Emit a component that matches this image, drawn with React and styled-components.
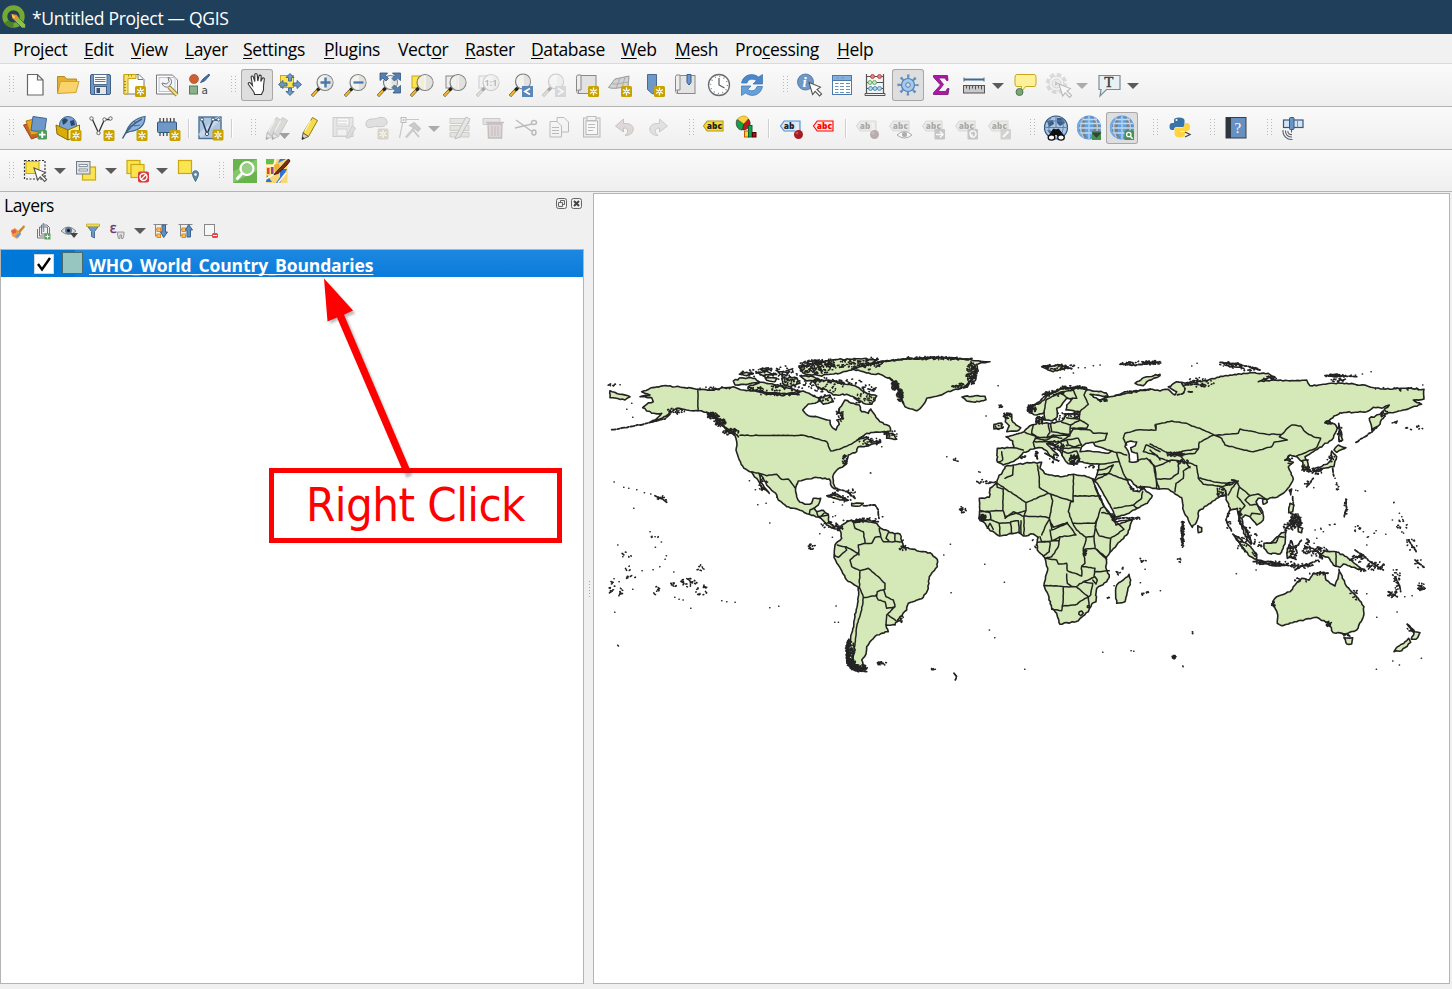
import React from "react";
import styled, { createGlobalStyle, css } from "styled-components";

const Global = createGlobalStyle`
  * { box-sizing: border-box; }
  body { margin: 0; background: #f0f0f0; font-family: "Open Sans", "Noto Sans", sans-serif; font-size: 17.5px; color: #000; overflow: hidden; }
`;

const Window = styled.div`
  position: relative; width: 1452px; height: 989px; display: flex; flex-direction: column; background: #f0f0f0; overflow: hidden;
`;
const TitleBar = styled.header`
  height: 34px; flex: none; display: flex; align-items: center; gap: 6px; padding-left: 2px; background: #203f5a; color: #fff;
  span { letter-spacing: -0.31px; padding-top: 1px; }
`;
const MenuBar = styled.nav`
  height: 30px; flex: none; display: flex; align-items: center; padding: 1px 0 0 13px; border-bottom: 1px solid #dadada; background: #f1f1f1;
`;
const MenuItem = styled.span`
  width: ${(p) => p.$w}px; white-space: nowrap; letter-spacing: -0.38px;
  u { text-underline-offset: 2px; text-decoration-thickness: 1px; text-decoration-skip-ink: none; }
`;
const Toolbar = styled.div`
  height: ${(p) => p.$h || 43}px; flex: none; display: flex; align-items: center;
  background: linear-gradient(#fafafa, #efefef); border-bottom: 1px solid #b4b4b4;
`;
const Button = styled.button`
  appearance: none; width: 33px; height: 32px; flex: none; margin: 0; border: 0; background: none; padding: 0 0 0 5px; display: flex; align-items: center;
  ${(p) => p.$on && css`background: #dedede; box-shadow: inset 0 0 0 1px #a8a8a8; border-radius: 3px; width: 32px; margin-left: 1px; padding-left: 4px;`}
  ${(p) => p.$off && css`svg { opacity: 0.36; filter: grayscale(0.75); }`}
  svg { flex: none; overflow: visible; }
`;
const Grip = styled.i`
  width: ${(p) => p.$w}px; flex: none; height: 18px; padding-left: ${(p) => p.$o}px;
  &::before { content: ""; display: block; width: 5px; height: 17px; background: radial-gradient(circle at 0.5px 0.5px, #b9b9b9 0.6px, transparent 0.7px) 0 0 / 4px 3px; }
`;
const Separator = styled.i`
  width: ${(p) => p.$w}px; flex: none; padding-left: 5px;
  &::before { content: ""; display: block; width: 1px; height: 19px; background: #cfcfcf; box-shadow: 1px 0 #fff; }
`;
const Caret = styled.i`
  width: ${(p) => p.$w || 17}px; flex: none; display: flex; justify-content: center; padding: 1px 2px 0 0;
  &::before { content: ""; border: 6px solid transparent; border-top-color: ${(p) => (p.$off ? "#ababab" : "#5b5b5b")}; border-bottom: 0; }
`;
const Main = styled.main` flex: 1; min-height: 0; display: flex; padding: 1px 2px 5px 0; `;
const Dock = styled.section` width: 584px; flex: none; display: flex; flex-direction: column; `;
const DockTitle = styled.div`
  height: 23px; display: flex; align-items: center; padding: 0 0 0 4px; font-size: 17.5px;
  span { flex: 1; letter-spacing: -0.5px; }
  svg { margin: -4px 0 0 1px; }
`;
const DockTools = styled.div`
  height: 33px; display: flex; align-items: center; padding: 0 0 4px 10px;
  svg { display: block; overflow: visible; flex: none; }
`;
const ToolSlot = styled.span` width: ${(p) => p.$w}px; flex: none; `;
const Tree = styled.div` flex: 1; background: #fff; border: 1px solid #b4b4b4; `;
const LayerRow = styled.div`
  height: 27px; display: flex; align-items: center; padding-left: 33px; color: #fff; font-size: 17.5px; font-weight: 700;
  background: linear-gradient(90deg, #0078d7 74px, transparent 74px), linear-gradient(#1c88e1, #0b7cdb);
  span { text-decoration: underline; text-decoration-thickness: 1px; text-underline-offset: 2px; text-decoration-skip-ink: none; letter-spacing: -0.13px; padding-top: 2px; }
`;
const Check = styled.i` width: 20px; height: 20px; background: #fff; border: 1px solid #cfd8df; margin-right: 8px; display: flex; svg { display: block; } `;
const Swatch = styled.i` width: 21px; height: 22px; background: #96c6bf; border: 1px solid #4a6a6c; margin: -1px 6px 0 0; `;
const Splitter = styled.div`
  width: 9px; flex: none; display: flex; align-items: center; justify-content: center; padding-left: 1px;
  &::before { content: ""; width: 1px; height: 16px; background: repeating-linear-gradient(#a8a8a8 0 1px, transparent 1px 3px); }
`;
const MapFrame = styled.section` flex: 1; background: #fff; border: 1px solid #b4b4b4; svg { display: block; } `;
const Callout = styled.div`
  position: absolute; left: 269px; top: 468px; width: 293px; height: 75px; border: 5px solid #f00; background: #fff; color: #f00;
  font: 47px/63px "DejaVu Sans Condensed", "DejaVu Sans", sans-serif; font-stretch: condensed; text-align: center; letter-spacing: -0.6px; white-space: nowrap;
`;
const ArrowLayer = styled.svg` position: absolute; left: 310px; top: 270px; pointer-events: none; `;

/* ---------- icon pieces ---------- */
const Star = ({ x = 13, y = 13 }) => (
  <g transform={`translate(${x} ${y})`}>
    <rect width="11" height="11" rx="1.5" fill="#c8a300" />
    <path d="M5.5 1.5v8M2 3.5l7 4M9 3.5l-7 4" stroke="#fff" strokeWidth="1.3" />
    <circle cx="5.5" cy="5.5" r=".8" fill="#c8a300" />
  </g>
);
const Lens = ({ x = 14, y = 9.5, r = 8, children }) => (
  <g>
    <path d={`M1 23l7-7.5`} stroke="#4b3a10" strokeWidth="3" />
    <path d="M1.3 22.7L6 17.6" stroke="#fcb932" strokeWidth="2" />
    <path d="M6.5 17.2l2.6-2.6" stroke="#222" strokeWidth="3.2" />
    <circle cx={x} cy={y} r={r} fill="#f1f1ee" fillOpacity=".88" stroke="#7b7d7b" strokeWidth="1.2" />
    <path d={`M${x + 1} ${y - r + 1}a${r - 1} ${r - 1} 0 0 1 0 ${2 * r - 2}z`} fill="#d5d6d2" opacity=".6" />
    {children}
  </g>
);
const Cursor = ({ x = 10, y = 10 }) => (
  <path transform={`translate(${x} ${y})`} d="M0 0l3.6 12 2.6-3.2 4.4 4.6 2-2-4.6-4.4 3.4-2.4z" fill="#fff" stroke="#555" strokeWidth="1.1" />
);
const Pencil = ({ x = 0, fill = "#f4dc4f" }) => (
  <g transform={`translate(${x} 0)`}>
    <path d="M4 17L13.5 1.5l5 3L9.5 20.500z" fill={fill} stroke="#8d7a20" strokeWidth="1" />
    <path d="M11.700 4.500l-6 11" stroke="#fff6b0" strokeWidth="1.2" />
    <path d="M4 17l-1 6.500 6.500-3z" fill="#d8cfb8" stroke="#555" strokeWidth=".9" />
    <path d="M3 23.500l.4-2.800 2.200 1.600z" fill="#222" />
  </g>
);
const Tag = ({ t = "abc", fill = "#f8da35", stroke = "#b59a1a", color = "#222", w = 16 }) => (
  <g>
    <path d={`M1.500 10l3.700-5H${w + 5}v10H5.200z`} fill={fill} stroke={stroke} strokeWidth="1.1" />
    <text x="4.8" y="13" fontFamily="Open Sans" fontWeight="800" fontSize="8.400" fill={color}>{t}</text>
  </g>
);
const Ball = () => (<g><path d="M17.500 6.500l1.200 6-2 3h3.500" fill="#ddd" stroke="#eee" strokeWidth="2" /><circle cx="19.500" cy="18.500" r="4.500" fill="#a51c22" /><circle cx="18" cy="17" r="1.500" fill="#c9484b" /></g>);
const Globe = () => (
  <g>
    <circle cx="12" cy="11.500" r="11.500" fill="#7c8087" />
    <circle cx="12" cy="11.500" r="11.300" fill="none" stroke="#5d97dc" strokeWidth="1.600" />
    <ellipse cx="12" cy="11.500" rx="4.500" ry="11" fill="#5fa3e4" />
    <path d="M1 7.500h22M0 12h24M2 17h20M4 3.500h16" stroke="#c2daf2" strokeWidth="1.300" />
    <path d="M12 0v23M6.500 1.500c-4 6-4 14 0 20M17.500 1.500c4 6 4 14 0 20" stroke="#b5d2ee" strokeWidth="1.300" fill="none" />
    <path d="M5 3C-.5 9 0 15 4 20" stroke="#74ace6" strokeWidth="2" fill="none" />
  </g>
);
const Card = ({ x, y, f = "#fbe44f" }) => <rect x={x} y={y} width="13" height="13" fill={f} stroke="#c9a810" strokeWidth="1.200" />;

const P = "#6d98c8";
const icons = {
  new: <path d="M4.500 1.500h10L20 7v15H4.500zM14.500 1.500V7H20" fill="#fff" stroke="#666" strokeWidth="1.200" />,
  open: <g><path d="M1.500 20V3.500h7l2 2.500h10v3" fill="#e2b133" stroke="#b98a22" /><path d="M1.500 20.500L4.500 8.500H23L20 19.500z" fill="#fbd36b" stroke="#d3a12e" /></g>,
  save: <g><rect x="1.500" y="1.500" width="20" height="20" rx="1.500" fill={P} stroke="#3f5f86" /><rect x="4.500" y="1.500" width="13.500" height="10" fill="#fafafa" stroke="#55708f" /><path d="M6 4.500h10.500M6 6.500h10.500M6 8.500h10.500" stroke="#777" /><rect x="5.500" y="13.500" width="12" height="8" fill="#e4e6e8" stroke="#3f5f86" /><rect x="7.500" y="15" width="3.500" height="5" fill="#3a5674" /></g>,
  layout: <g><path d="M2 1.500h15l5 5V21H2z" fill="#fff" stroke="#777" /><path d="M2 1.500h12v4H6V21H2z" fill="#f7df72" stroke="#c8a412" /><path d="M6.500 1.500v2M9.500 1.500v2M2 8.500h2M2 11.500h2M2 14.500h2M2 17.500h2" stroke="#927812" strokeWidth=".8" /><path d="M16 1.500v5h5" fill="none" stroke="#777" /><Star /></g>,
  manager: <g><path d="M1.500 2h16l5 5v14h-21z" fill="#fff" stroke="#777" /><rect x="4" y="4.500" width="16" height="14" fill="#f3f6fb" stroke="#b9c4d8" /><path d="M14 14l8 8" stroke="#927d34" strokeWidth="4" /><path d="M14 14l8 8" stroke="#f0dd8b" strokeWidth="2.400" /><path d="M13 4.500c3 .5 4.500 3.500 3 6.500l-2.500 3c-3 .8-6-1-6.500-4l4.500 1 2.500-2.500z" fill="#eee" stroke="#777" /></g>,
  style: <g><circle cx="6" cy="6" r="4.500" fill="#cf5f31" stroke="#9a3f20" strokeWidth=".6" /><path d="M12.500 9.500l2.500-3.500 6-5 .5 1.500-5 5.500z" fill="#4b719c" stroke="#345b87" /><rect x="1.500" y="13" width="8" height="8" fill="#8bb08b" stroke="#4f8055" /><text x="13.500" y="21" fontFamily="DejaVu Sans" fontSize="10.500" fill="#444">a</text></g>,
  hand: <path d="M7.500 17L3.500 11.500c-1-1.500 1-2.600 2-1.400l2 2.400L6.200 4.500c-.3-1.700 1.800-2 2.200-.5l1.400 4.500V1.700c0-1.600 2.300-1.600 2.400 0L12.800 8l1.200-5c.4-1.500 2.300-1 2.200.5L15.800 8.500l1.500-3c.7-1.300 2.400-.6 2 .8L18.500 13v3.500c0 2-1.500 3-2 5H9.500c0-2-1-3-2-4.500z" fill="#fff" stroke="#333" strokeWidth="1.100" />,
  pan: <g><rect x="2.500" y="2.500" width="13" height="12" fill="#fbe44f" stroke="#c9a810" /><path d="M12 .5l4 4h-2.500v3.500h-3V4.500H8zM12 22.500l4-4h-2.500V15h-3v3.500H8zM.5 11.500L5 7.500V10h4v3H5v2.500zM23.500 11.500L19 7.500V10h-4v3h4v2.500z" fill={P} stroke="#3d648f" strokeWidth=".9" /></g>,
  zin: <Lens><path d="M14.500 4.500v10M9.500 9.500h10" stroke="#4878ac" strokeWidth="2.400" /></Lens>,
  zout: <Lens><path d="M9.500 9.500h10" stroke="#4878ac" strokeWidth="2.200" /></Lens>,
  full: <g><Lens x={13.500} y={9.500} r={7} /><path d="M3 0h7.500L8.500 2.500l3 3-2.500 2.500-3-3L3 7.500zM23.500 0v7.500l-3-2.500-3 3L15 5.500l3-3L15.500 0zM23.500 20H16l2-2.500-3-3 2.500-2.500 3 3 3-2.500z" fill="#5580b2" stroke="#31577f" strokeWidth=".8" /></g>,
  zsel: <g><rect x="2" y="3" width="11" height="12" fill="#fbe44f" stroke="#c9a810" /><Lens x={15} /></g>,
  zlay: <g><rect x="3" y="3" width="11" height="12" fill="#eee" stroke="#888" /><Lens x={15} /></g>,
  znat: <g><rect x="3" y="3" width="11" height="12" fill="#eee" stroke="#888" /><Lens x={15} /><text x="8.500" y="13" fontFamily="Open Sans" fontWeight="700" fontSize="9" fill="#555">1:1</text></g>,
  zlast: <g><Lens x={14} y={8.500} r={7.500} /><rect x="13" y="13" width="11" height="11" fill="#5b87b7" /><path d="M21 15.500L16 18.500l5 3" stroke="#fff" strokeWidth="1.800" fill="none" /></g>,
  znext: <g><Lens x={14} y={8.500} r={7.500} /><rect x="13" y="13" width="11" height="11" fill="#9aa8b7" /><path d="M16 15.500l5 3-5 3" stroke="#fff" strokeWidth="1.800" fill="none" /></g>,
  mapview: <g><rect x="3.500" y="2.500" width="17.500" height="18" fill="#e2e2e2" stroke="#888" /><path d="M3.500 20.500c-3-1-2-3.500 0-3.500H6V2H3C1 2 1.500 5 1.500 7v11" fill="#eee" stroke="#888" /><Star /></g>,
  view3d: <g><path d="M.5 14.500L7 6l14-3-1 12c-7-2-12 2-19.500-.5z" fill="#d2d2d2" stroke="#999" /><path d="M4 10.500c6 2 10-2 17-1M12 5L8 15.500M17 4l-3 11" stroke="#aaa" fill="none" /><Star /></g>,
  bookmark: <g><path d="M6.500 1.500h9v20l-4.500-1-4.500-4z" fill={P} stroke="#456b96" /><Star x={13} y={13} /></g>,
  bookmarks: <g><rect x="3.500" y="2.500" width="17.500" height="18" fill="#e4e4e4" stroke="#888" /><path d="M3.500 20.500c-3-1-2-3.500 0-3.500H6V2H3C1 2 1.500 5 1.500 7v11" fill="#eee" stroke="#888" /><path d="M13 1.500h4v8l-2 2.500-2-2.500z" fill={P} stroke="#365d8a" /></g>,
  clock: <g><circle cx="12" cy="12" r="10.500" fill="#fff" stroke="#6b6b6b" strokeWidth="1.300" /><circle cx="12" cy="12" r="8.500" fill="none" stroke="#789" strokeWidth="1.500" strokeDasharray="1 3.450" /><path d="M12 5v7l5.500 3" stroke="#555" strokeWidth="1.200" fill="none" /></g>,
  refresh: <g><path d="M1.500 10C3 2 12-1 18.500 4L22.500 1.500V11h-9.500l3.500-3.500C12 5 8 6 7 10z" fill="#4b88cb" stroke="#3b70ac" strokeWidth=".7" /><path d="M22.500 13.500C21 22 12 25 5.500 20L1.500 22.500V13H11L7.500 16.500c4 2.500 8 1.500 9.500-3z" fill="#66a0da" stroke="#3b70ac" strokeWidth=".7" /></g>,
  identify: <g><circle cx="8.500" cy="9" r="8" fill={P} stroke="#466f9f" strokeWidth=".8" /><text x="5.500" y="14" fontFamily="Liberation Serif" fontStyle="italic" fontWeight="700" fontSize="15" fill="#fff">i</text><Cursor x={12} y={9.500} /></g>,
  table: <g><rect x="2.500" y="2.500" width="19" height="19" fill="#fff" stroke="#4b7aaa" /><rect x="3" y="3" width="18" height="4" fill="#86b1df" /><path d="M2.500 7.500h19" stroke="#4b7aaa" /><path d="M5 10.500h3.500M5 13.500h3.500M5 16.500h3.500M5 19.500h3.500M10 10.500h4M10 13.500h4M10 16.500h4M10 19.500h4M16 10.500h4M16 13.500h4M16 16.500h4M16 19.500h4M6 5h3M11 5h3" stroke="#6a93bf" /></g>,
  abacus: <g><path d="M3.500 1v20M20.500 1v20M3.500 3.500h17M3.500 9.500h17M3.500 15.500h17" stroke="#555" strokeWidth="1.200" /><path d="M2 20.500h20v2H2z" fill="#eee" stroke="#555" /><g strokeWidth=".8"><g fill="#ef8080" stroke="#a33"><circle cx="9.500" cy="3.500" r="2" /><circle cx="16.500" cy="3.500" r="2" /></g><g fill="#c1edbc" stroke="#5a9a55"><circle cx="7" cy="9.500" r="2" /><circle cx="11.500" cy="9.500" r="2" /></g><g fill="#a9d6f2" stroke="#3d7ca8"><circle cx="7.500" cy="15.500" r="2" /><circle cx="12" cy="15.500" r="2" /><circle cx="16.500" cy="15.500" r="2" /></g></g></g>,
  gear: <g><circle cx="12" cy="12" r="8.700" fill="none" stroke="#5f90c6" strokeWidth="3.800" strokeDasharray="2.300 4.533" strokeDashoffset="1.150" /><circle cx="12" cy="12" r="6.500" fill="#a7c9ee" stroke="#4d7fb5" strokeWidth="1.200" /><circle cx="12" cy="12" r="2.300" fill="#dedede" stroke="#4d7fb5" /></g>,
  sigma: <path d="M4.500 2.500h14l.5 5h-1.500L16 5H9.500l5 6.500L9 18.500h7.500l2-3H20l-1 6H4.500v-1.800l7-7.700-7-7.800z" fill="#b116aa" stroke="#73116f" strokeWidth=".8" />,
  measure: <g><path d="M2 4.500v4M22 4.500v4" stroke="#42688c" strokeWidth="1" /><path d="M2 6.500h20" stroke="#42688c" strokeWidth="2" /><rect x="1.500" y="12.500" width="21" height="7.500" fill="#c9c9c9" stroke="#555" /><path d="M4.500 12.500v3M7.500 12.500v4M10.500 12.500v3M13.500 12.500v4M16.500 12.500v3M19.500 12.500v4" stroke="#555" /></g>,
  tips: <g><path d="M4 1.500h17q2 0 2 2.500v7q0 2.500-2 2.500h-8.500L8 19.500l.5-6H4q-2 0-2-2.500V4q0-2.500 2-2.500z" fill="#fff09a" stroke="#c8a71f" /><circle cx="6.500" cy="19" r="3.500" fill="#7ba47b" stroke="#4d784d" /></g>,
  action: <g><circle cx="10.500" cy="10.500" r="8.700" fill="none" stroke="#aaa" strokeWidth="4" strokeDasharray="4.400 2.433" /><circle cx="10.500" cy="10.500" r="7.500" fill="#eee" stroke="#999" /><circle cx="10.500" cy="10.500" r="4.500" fill="#ddd" stroke="#999" /><path d="M9 8v5l4-2.500z" fill="#777" /><Cursor x={13} y={11} /></g>,
  text: <g><path d="M2 2.500h21v14H9.500L3 23l1-6.500H2z" fill="#e8f2f5" stroke="#7b8b95" strokeWidth="1.200" /><text x="7.300" y="14.200" fontFamily="Liberation Serif" fontWeight="400" fontSize="15" fill="#3a3a3a" stroke="#3a3a3a" strokeWidth=".4">T</text></g>,

  datasource: <g><path d="M.5 9l11-3 5 14-8 3z" fill="#cc5d2e" stroke="#9f431e" /><path d="M3 5l12-3 4 15-11 2z" fill="#e6a91f" stroke="#ae7d10" /><path d="M10 .5l13.500 2-2 14L8 14.500z" fill={P} stroke="#3d6491" /><rect x="14.500" y="14" width="9.500" height="9.500" rx="1.500" fill="#4f9a5c" /><path d="M19.200 15.500V22M16 18.700h6.500" stroke="#fff" strokeWidth="1.800" /></g>,
  geopackage: <g><circle cx="12" cy="9" r="8.500" fill="#7aa4d5" stroke="#456b96" /><path d="M6 4l3-2 3 2-2 3-3 2zM14 5l4-1 1 5-4 1z" fill="#2a4768" /><path d="M0 9l12 5v10L1 18z" fill="#d9ac09" stroke="#8d6c00" /><path d="M12 14l11.500-5v10L12 24z" fill="#fff176" stroke="#8d6c00" /><Star x={14.500} y={14} /></g>,
  shape: <g><path d="M3 2.500L9.500 17 15.500 3.500h6" fill="none" stroke="#333" strokeWidth="1.300" /><g fill="#fff" stroke="#666"><circle cx="2.500" cy="2.500" r="1.700" /><circle cx="9.500" cy="17" r="1.700" /><circle cx="15.500" cy="3.500" r="1.700" /><circle cx="21.500" cy="2.500" r="1.700" /></g><Star x={14.500} y={14} /></g>,
  feather: <g><path d="M4 17C6 9 13 2 23 .5 23 8 19 14 8 15.500z" fill="#8fb4dc" stroke="#3d648f" strokeWidth="1.200" /><path d="M.500 22.500C5 13 12 7 20 3" stroke="#3d5f86" strokeWidth="1.400" fill="none" /><path d="M8 13l1-4M12 10l1-5M12 10l6-1" stroke="#486e99" fill="none" /><Star x={14.500} y={14} /></g>,
  memory: <g><path d="M5 2v18M8.500 2v18M12 2v18M15.500 2v18M19 2v18" stroke="#444" strokeWidth="1.300" /><rect x="2.500" y="6" width="19" height="10.500" rx="1" fill={P} stroke="#33577f" /><Star x={14.500} y={14} /></g>,
  virtual: <g><rect x="1" y="1" width="22" height="21.500" fill="#aec5dd" stroke="#4b6f97" strokeWidth="1.400" /><path d="M1.500 20L22 1.500" stroke="#d7e3f0" strokeWidth="5" opacity=".6" /><path d="M4 3.500L9 18l6-14h5" fill="none" stroke="#223f60" strokeWidth="1.500" /><g fill="#fff" stroke="#355679"><circle cx="4" cy="3.500" r="1.600" /><circle cx="9" cy="18" r="1.600" /><circle cx="15" cy="3.500" r="1.600" /><circle cx="20.500" cy="3.500" r="1.600" /></g><Star x={14.500} y={13.500} /></g>,
  pencils: <g><Pencil x={-3} fill="#aaa" /><Pencil x={3} fill="#aaa" /><path d="M13 17h11l-5.500 6z" fill="#111" /></g>,
  pencil: <Pencil />,
  savepen: <g><rect x="1" y="1.500" width="20" height="19" fill="#ccc" stroke="#888" /><rect x="5" y="2" width="12" height="8" fill="#fff" stroke="#888" /><path d="M6 5h9M6 8h9" stroke="#999" /><rect x="5" y="13" width="10" height="7" fill="#eee" stroke="#999" /><path d="M14 22l6-12 3.500 2-6 10z" fill="#bba" stroke="#888" /></g>,
  blob: <g><path d="M1 9c-1-8 8-5 12-7 5-2 10 1 9 5s-7 4-10 3.500C8 10 2 14 1 9z" fill="#bbb" stroke="#777" /><Star x={12.500} y={12.500} /></g>,
  vertex: <g><path d="M1.500 22L5 5M8 3.500h13" fill="none" stroke="#777" strokeWidth="1.200" /><rect x="3" y="1.500" width="5" height="5" fill="#eee" stroke="#555" /><circle cx="5.500" cy="4" r="1" fill="#555" /><path d="M17 11L8 21.500" stroke="#888" strokeWidth="2.600" /><path d="M12 9.500l4-2.500 6 5.500-2 2.500-4-3.500zM15 14l6 7" fill="#888" stroke="#777" strokeWidth="1.800" /></g>,
  multiedit: <g><path d="M2 2.500h19v5H2zM2 9.500h19v5H2zM2 16.500h19v4.500H2z" fill="#d9c97a" stroke="#888" /><path d="M8 20L18 1l4 2-10 18-5 2z" fill="#ccc" stroke="#666" /></g>,
  trash: <g><path d="M2 2.500h17v6H2z" fill="#d8bcbc" stroke="#977" /><path d="M5 6.500h18M7 8l.5 14h13L21 8z" fill="#d99" stroke="#a55" strokeWidth="1.400" /><path d="M11 10v10M14 10v10M17 10v10" stroke="#a55" /></g>,
  cut: <g fill="none" stroke="#555" strokeWidth="1.400"><path d="M2 4l16 11.500M1 12l17-4" /><ellipse cx="20" cy="6.500" rx="2.500" ry="2" /><ellipse cx="20" cy="16.500" rx="2" ry="2.500" /></g>,
  copy: <g fill="#f4f4f4" stroke="#555"><path d="M10 1.500h7l4.500 4.500V16H10z" /><path d="M3 5.500h7l4.500 4.500v11H3z" /><path d="M5 11.500h7M5 14.500h7M5 17.500h7" /></g>,
  paste: <g stroke="#555"><rect x="3.500" y="2" width="16.500" height="19" fill="#ddd" /><rect x="6" y="5" width="11.500" height="13.500" fill="#fff" /><rect x="7" y=".5" width="9" height="4" fill="#eee" /><path d="M8 8.500h7M8 11.500h7M8 14.500h5" /></g>,
  undo: <path d="M2.500 10l8-7v4.500c8-.5 10.500 3 9.500 7-1 4-5 5-8 5 3-2 5-7.500-1.500-7.500V16z" fill="#d8a08a" stroke="#98604a" />,
  redo: <path d="M21.500 10l-8-7v4.500c-8-.5-10.500 3-9.500 7 1 4 5 5 8 5-3-2-5-7.500 1.500-7.500V16z" fill="#b5c7a8" stroke="#6a8a5c" />,
  label: <Tag />,
  diagram: <g><path d="M9 8L2 3.500C0 8 2 14 7 14z" fill="#12a04a" stroke="#222" strokeWidth=".6" /><path d="M9 8L2.500 3c4-4 9-4 11 0z" fill="#ffd23b" stroke="#a80" strokeWidth=".6" /><path d="M9 8l4.500-5c3.500 4 1.500 11-6 11z" fill="#b71c1c" stroke="#222" strokeWidth=".6" /><rect x="9.500" y="15" width="4" height="6" fill="#ffd23b" stroke="#c50" /><rect x="13.500" y="9.500" width="3.500" height="11.500" fill="#1ba052" stroke="#063" /><rect x="17.500" y="16.500" width="3.500" height="4.500" fill="#a11" stroke="#500" /></g>,
  labelpin: <g><Tag t="ab" fill="#d5e7fa" stroke="#4b8fd8" /><Ball /></g>,
  labelred: <Tag fill="#fde8e8" stroke="#f00" color="#f00" />,
  labelhold: <g><Tag t="ab" fill="#ddd8c0" stroke="#aa9" /><Ball /></g>,
  labeleye: <g><Tag fill="#ddd8c0" stroke="#aa9" /><path d="M9 19q7.500-7 15 0-7.500 6-15 0z" fill="#fff" stroke="#333" /><circle cx="16.500" cy="18.500" r="2.500" fill="#333" /></g>,
  labelmove: <g><Tag fill="#ddd8c0" stroke="#aa9" /><rect x="13.500" y="13" width="10.500" height="10.500" rx="1" fill="#777" /><path d="M15 18.500h7M19 15.500l3 3-3 3" stroke="#fff" strokeWidth="1.600" fill="none" /></g>,
  labelrot: <g><Tag fill="#ddd8c0" stroke="#aa9" /><rect x="13.500" y="13" width="10.500" height="10.500" rx="1" fill="#777" /><path d="M17 21l-1-3a3 3 0 1 1 4.500 2.500M18 18v3h3" stroke="#fff" strokeWidth="1.400" fill="none" /></g>,
  labeledit: <g><Tag fill="#ddd8c0" stroke="#aa9" /><rect x="13.500" y="13" width="10.500" height="10.500" rx="1" fill="#997" /><path d="M16 21l5.500-5.500" stroke="#fff" strokeWidth="2.200" /></g>,
  metasearch: <g><circle cx="12" cy="11.500" r="11.500" fill="#a9c4e4" stroke="#2d5078" strokeWidth="1.200" /><path d="M3 5l6-1 1 4-5 3zM13 2h5l3 5-5 3-3-3zM3 14l5 1-1 4z" fill="#3c5c82" /><path d="M0 11.500h24M12 0v12M3 5h18M7 1c-3 6-3 12 0 18M17 1c3 6 3 12 0 18" stroke="#587ca4" strokeWidth=".9" /><path d="M5 20L9.500 13l2.500 1 2.500-1L20 20l-4 2-4-4-4 4z" fill="#111" stroke="#111" /><g fill="#fff" stroke="#111" strokeWidth="1.300"><ellipse cx="7.500" cy="21.500" rx="3.300" ry="2.600" /><ellipse cx="17" cy="21.500" rx="3.300" ry="2.600" /></g></g>,
  globeadd: <g><Globe /><rect x="15" y="15" width="9" height="9" fill="#43934f" /><path d="M14.500 16.500h10l-5 5.500z" fill="#3a403a" /></g>,
  globefind: <g><Globe /><rect x="14.500" y="14.500" width="9.500" height="9.500" fill="#43934f" /><circle cx="18.800" cy="18.500" r="2.200" fill="none" stroke="#fff" strokeWidth="1.300" /><path d="M20.500 20.500l2.200 2.200" stroke="#fff" strokeWidth="1.500" /></g>,
  python: <g><path d="M6 7V4q0-2.500 5-2.500T16.500 4v5q0 2-2 2H8.500Q6 11 6 14H4Q1.500 14 1.500 10.500T4 7h7" fill="#3874a5" /><path d="M16.500 7h2.500q3 0 3 4t-3 4h-7v.7h5V18q0 3.500-5 3.500T6.500 18v-4q0-2.500 2.500-2.500h5q2.500 0 2.500-3z" fill="#ffd342" /><circle cx="8.500" cy="4" r="1" fill="#fff" /><path d="M17 16l5 2.500-5 2.500" stroke="#444" strokeWidth="1.300" fill="none" /></g>,
  help: <g><rect x="2" y="1.500" width="20" height="20.500" fill="#6790c0" stroke="#333e4b" /><rect x="2" y="1.500" width="5" height="20.500" fill="#2b3641" /><text x="10.500" y="17" fontFamily="Liberation Serif" fontSize="15" fill="#fff">?</text></g>,
  gps: <g><rect x="2.500" y="4" width="19.500" height="7.500" fill="#d5e4f4" stroke="#33577f" strokeWidth="1.200" /><rect x="8.500" y="1.500" width="4.500" height="12" rx="1" fill="#6895c8" stroke="#33577f" /><path d="M16.500 4v7.500" stroke="#6b93bd" /><path d="M10.500 13.500v3M7 15c-.5 2 1 4 4 3.500M4.500 14.500c-.5 4 2.500 7 6.500 6.500M2 14c-.5 6 4 10 9.500 9.500" fill="none" stroke="#55606d" strokeWidth="1.100" /></g>,

  select: <g><rect x="1.500" y="1.500" width="20.500" height="18.500" fill="none" stroke="#333" strokeDasharray="2 1.500" strokeWidth="1.200" /><rect x="3" y="2.500" width="13" height="12" fill="#fbe44f" stroke="#c9a810" /><Cursor x={11} y={9} /></g>,
  form: <g><Card x={7.500} y={8} /><rect x="1.500" y="2.500" width="13.500" height="12.500" fill="#dfe3e8" stroke="#707a88" /><path d="M4 5.500h8.500v2H4zM4 10h8.500v2H4z" fill="#fff" stroke="#8893a0" /></g>,
  deselect: <g><Card x={1} y={1.500} /><Card x={5} y={5.500} /><rect x="12" y="12.500" width="11" height="11" rx="2" fill="#d9393d" /><circle cx="17.500" cy="18" r="3.500" fill="none" stroke="#fff" strokeWidth="1.400" /><path d="M15 20.500l5-5" stroke="#fff" strokeWidth="1.400" /></g>,
  selectpin: <g><Card x={2.500} y={1.500} /><path d="M19.500 22.500l-2.500-5q-1.500-5.500 2.500-5.800 4 .3 2.500 5.800z" fill="#648ba5" stroke="#496f88" /><circle cx="19.500" cy="15.500" r="1.300" fill="#fff" /></g>,
  qms: <g><rect x="0" y="0" width="24" height="24" fill="#67b34c" /><path d="M0 12.500L24 0v12L0 24z" fill="#82c768" /><circle cx="14" cy="9.500" r="6.500" fill="#b9dca9" fillOpacity=".45" stroke="#fff" strokeWidth="2.200" /><path d="M9.500 14l-6 6.500" stroke="#fff" strokeWidth="2.800" /></g>,
  osm: <g><rect x="0" y="0" width="21.500" height="24" fill="#f8d77a" /><path d="M0 0h8v5H0z" fill="#5fc04f" /><path d="M12 4l8-4h-6zM14 10h7l-3 6-4 8h-4l4-6zM1 16l5 7H0z" fill="#2f73dd" /><path d="M10 0L7 8M0 20l9-6M0 7h8M20 14l-8 10" stroke="#fff7d9" strokeWidth="1.800" fill="none" /><path d="M8 6l5-2 1 5-5 5z" fill="#efb135" /><rect x="1" y="9" width="2.500" height="6" fill="#de4646" /><rect x="5" y="8" width="2.500" height="7" fill="#8a4a8e" /><path d="M8 15.500L19.500 3l3-3 1.500 2-3 4-9 8.500z" fill="#7c2e12" stroke="#441b0c" /></g>,
};
const Icon = ({ n }) => <svg width="24" height="24" viewBox="0 0 24 24" fill="none">{icons[n]}</svg>;

/* g: grip [width, dot offset]; s: separator; c: caret; "!" pressed, "-" disabled */
const rows = [
  [["g", 18, 9], "new", "open", "save", "layout", "manager", "style", ["g", 24, 15], "!hand", "pan", "zin", "zout", "full", "zsel", "zlay", "-znat", "zlast", "-znext", "mapview", "view3d", "bookmark", "bookmarks", "clock", "refresh", ["g", 24, 15], "identify", "table", "abacus", "!gear", "sigma", "measure", ["c", 18], "tips", "-action", ["c", 18, 1], "text", ["c", 17]],
  [["g", 18, 9], "datasource", "geopackage", "shape", "feather", "memory", ["s", 10], "virtual", ["s", 10], ["g", 25, 15], "-pencils", "pencil", "-savepen", "-blob", "-vertex", ["c", 17, 1], "-multiedit", "-trash", "-cut", "-copy", "-paste", "-undo", "-redo", ["g", 23, 15], "label", "diagram", ["s", 11], "labelpin", "labelred", ["s", 10], "-labelhold", "-labeleye", "-labelmove", "-labelrot", "-labeledit", ["g", 24, 15], "metasearch", "globeadd", "!globefind", ["g", 25, 15], "python", ["g", 23, 14], "help", ["g", 24, 15], "gps"],
  [["g", 18, 9], "select", ["c", 19], "form", ["c", 18], "deselect", ["c", 17], "selectpin", ["g", 24, 15], "qms", "osm"],
];
const renderTool = (t, i) => {
  if (Array.isArray(t)) {
    if (t[0] === "g") return <Grip key={i} $w={t[1]} $o={t[2]} />;
    if (t[0] === "s") return <Separator key={i} $w={t[1]} />;
    return <Caret key={i} $w={t[1]} $off={t[2]} />;
  }
  const on = t[0] === "!", off = t[0] === "-";
  return <Button key={i} $on={on} $off={off}><Icon n={on || off ? t.slice(1) : t} /></Button>;
};

const menu = [["Pro", "j", "ect", 71], ["", "E", "dit", 47], ["", "V", "iew", 54], ["", "L", "ayer", 58], ["", "S", "ettings", 81], ["", "P", "lugins", 74], ["Vect", "o", "r", 67], ["", "R", "aster", 66], ["", "D", "atabase", 90], ["", "W", "eb", 54], ["", "M", "esh", 60], ["Pro", "c", "essing", 102], ["", "H", "elp", 60]];

/* ---------- world map ---------- */
const rand = (seed) => { let s = seed; return () => ((s = (s * 16807) % 2147483647) / 2147483647); };
const tile = (ox, oy) => (str) => str.trim().split(/\s+/).map((p) => { const [x, y] = p.split(",").map(Number); return [ox + x / 3, oy + y / 3]; });
const A = tile(600, 345), B = tile(860, 345), C = tile(1150, 345), D = tile(600, 500), E = tile(950, 480), F = tile(1170, 480);
const rough = (pts, closed, amp) => {
  const r = rand(Math.round(pts[0][0] * 31 + pts[0][1] * 17) + pts.length);
  const out = [];
  const n = closed ? pts.length : pts.length - 1;
  for (let i = 0; i < n; i++) {
    const [x, y] = pts[i], [u, v] = pts[(i + 1) % pts.length];
    out.push([x, y]);
    const k = Math.floor(Math.hypot(u - x, v - y) / 2.2);
    for (let j = 1; j < k; j++) out.push([x + ((u - x) * j) / k + (r() - 0.5) * amp, y + ((v - y) * j) / k + (r() - 0.5) * amp]);
  }
  if (!closed) out.push(pts[pts.length - 1]);
  return "M" + out.map((p) => p[0].toFixed(1) + " " + p[1].toFixed(1)).join("L") + (closed ? "z" : "");
};
const land = [
  A("125,140 150,130 190,122 240,126 295,133 335,135 375,128 400,125 430,135 460,138 500,148 540,146 580,148 610,138 640,152 662,160 645,175 625,177 608,195 625,212 660,218 690,226 695,245 708,255 718,238 710,225 728,218 728,205 712,205 718,190 725,182 735,165 760,175 778,180 785,200 805,205 812,192 825,210 840,230 868,243 872,258 840,262 800,265 772,285 790,280 800,275 815,292 842,290 805,303 775,305 770,320 745,330 740,345 732,362 708,378 698,395 700,415 708,432 695,425 688,402 655,398 620,402 595,408 587,428 590,455 600,472 620,478 635,475 640,460 662,460 655,480 642,490 650,500 670,496 685,508 686,530 700,543 725,548 705,552 680,540 660,518 628,508 600,496 560,485 535,465 530,450 505,425 490,400 478,388 485,415 508,445 490,432 470,400 455,382 432,370 418,345 408,315 410,290 405,272 375,250 345,220 320,202 295,197 260,195 230,190 205,208 180,222 150,232 175,216 185,205 155,205 128,188 140,178 160,170 155,158 120,155 150,150"),
  A("30,137 60,148 90,155 75,165 30,158"),
  A("400,108 425,98 465,100 478,110 430,118 405,120"), A("445,125 480,112 520,118 560,128 600,138 560,146 500,142 460,135"),
  A("640,110 680,105 730,115 770,125 800,145 830,153 815,178 790,175 765,158 740,148 700,150 680,135 650,125"), A("600,70 650,52 700,44 770,41 835,43 800,60 760,72 720,85 660,92 610,85"), A("545,100 590,98 600,115 570,125 548,115"), A("655,160 690,150 700,170 670,178"),
  A("418,88 440,82 460,86 440,92"), A("470,84 500,78 520,88 490,92"), A("480,72 505,68 510,74 490,78"), A("535,80 565,82 560,92 540,88"), A("600,92 640,95 660,105 620,108"), A("495,98 530,100 525,110 500,106"),
  A("860,268 878,265 890,283 860,280"), A("680,452 705,446 745,466 720,465"), A("755,475 790,475 780,483 755,482"),
  B("-25,72 20,60 60,50 130,43 230,38 300,40 335,45 390,50 350,58 355,78 335,100 322,125 280,135 250,147 200,160 185,185 172,197 135,185 118,150 115,125 90,100 60,88 20,84"),
  B("306,156 345,152 375,154 378,164 345,172 320,168"), B("435,212 455,208 455,225 468,240 482,248 472,258 440,260 448,242 436,230"), B("402,238 425,234 425,250 402,252"), B("545,65 600,60 625,66 580,80"), B("825,115 860,95 900,88 900,92 860,110 850,122"),
  [...B("650,125 600,132 565,150 540,175 505,185 508,203 530,210 552,202 556,225 575,228 592,215 590,190 605,180 620,160 638,160 620,180 618,195 660,200 650,205 622,206 605,228 570,236 545,234 548,218 532,216 528,238 510,242 492,260 468,268 438,275 458,288 462,308 412,310 412,350 430,360 452,352 475,340 490,322 520,312 545,308 565,325 580,338 582,328 595,332 575,312 560,296 580,298 600,318 612,340 625,356 638,358 645,340 655,330 658,350 690,356 718,358 712,385 705,405 715,430 745,475 765,517 800,507 832,490 862,475 877,452 855,434 848,425 838,440 820,438 798,402 812,405 832,428 855,425 900,432"), ...C("55,432 70,442 95,458 98,490 115,525 127,547 142,525 146,498 170,482 200,460 225,450 232,470 242,495 262,490 270,530 285,570 303,598 300,575 278,540 275,520 285,510 300,515 320,540 340,525 338,500 318,470 325,460 345,462 375,458 400,445 418,425 430,402 415,365 430,352 405,345 420,330 440,335 458,350 460,375 478,368 465,335 490,320 520,300 545,285 562,250 555,238 525,232 570,203 650,200 670,187 700,188 718,180 690,208 658,220 665,256 690,238 705,207 760,195 815,178 790,165 822,162 822,133 760,130 700,132 650,122 590,115 550,115 520,118 480,122 470,105 400,108 370,104 325,110 368,95 355,85 300,83 240,90 180,103 120,115 80,110 55,125 80,140 75,150 55,133 30,138"), ...B("870,132 800,145 750,155 715,165 690,148 745,155 738,143 690,135")],
  [...B("435,365 460,360 495,355 545,352 540,370 560,388 600,395 640,388 680,395 705,405 705,425 730,480 758,520 768,540 818,522"), ...E("548,118 530,165 500,195 470,230 468,265 478,285 470,305 440,325 438,365 425,372 415,395 385,422 330,433 320,400 305,385 295,345 282,315 293,270 285,235 262,210 262,185 265,172 250,162 220,168 205,157 148,168 120,152 100,125 88,115 88,55 118,52 120,25 140,10"), ...B("415,398 435,370")],
  E("537,283 542,300 525,365 500,370 497,345 500,315 520,300"),
  D("715,85 735,70 755,60 765,68 790,62 830,70 842,85 870,98 900,102 910,140 950,152 990,158 1012,178 1012,200 988,230 985,265 970,292 925,310 920,330 900,350 885,375 858,375 865,395 830,405 815,420 800,440 798,462 785,480 795,510 765,512 742,490 740,460 755,400 765,350 775,290 775,262 740,240 715,195 702,172 705,135 725,115 722,95"),
  F("308,365 320,350 360,335 375,315 395,295 418,300 430,280 465,280 468,300 495,318 505,290 507,268 530,320 560,350 582,380 580,410 560,450 525,462 490,458 475,430 440,412 380,425 335,437 322,430 322,400"), F("522,473 548,473 545,492 530,492"),
  F("712,433 735,455 750,458 738,478 724,478 732,458"), F("716,475 722,487 695,512 672,515 678,505 705,485"),
  F("188,162 215,180 245,205 258,220 260,238 235,225 210,190"), F("258,240 300,246 345,256 300,256"), F("282,190 300,190 335,158 348,155 345,192 330,222 295,220 282,205"), F("352,205 370,205 368,215 360,232 352,235"),
  F("428,205 455,222 465,212 500,216 530,230 548,245 575,268 545,262 520,252 510,262 490,255 475,232 450,225"), F("360,70 372,75 368,95 356,98"), F("385,140 398,145 395,158 385,155"),
  C("545,318 560,335 552,365 520,370 490,380 495,370 530,358 545,340"), C("565,300 588,308 560,322 552,315"), C("566,235 575,265 578,285 568,290"), C("143,542 155,548 155,560 145,563"), C("338,463 350,462 352,472 340,478"), C("418,436 425,432 422,450"), C("220,55 260,55 275,65 240,66"), C("535,92 560,87 580,92 560,96"),
];
const water = [
  B("800,292 812,288 830,291 826,302 812,308 815,320 832,325 835,348 822,352 808,350 808,330 804,318 795,305"),
  B("660,320 665,305 678,295 700,292 705,302 755,318 745,325 690,318"),
  B("697,402 712,415 750,480 765,512 760,518 730,480 705,422"),
];
const borders = [
  A("420,271 610,271 640,278 680,290 692,318 725,310 755,297 790,272"), A("294,133 294,197"), A("455,380 500,392 530,388 545,403 565,402 585,428"), A("628,508 630,495 642,490"), A("650,500 655,515 685,510"), A("660,518 672,505"), A("680,535 690,530"),
  B("552,202 558,165 600,142 640,135 650,160 638,160"), B("600,142 625,160"), B("655,130 680,135 672,150 685,178 660,200"), B("520,240 515,265 530,275 560,278 570,262 565,238"), B("572,238 575,260 600,265 630,268 632,240 605,232"), B("632,240 660,225 685,240 680,250 635,250"), B("630,268 640,252 690,255 700,265 742,265 735,285 705,292"), B("620,285 655,280 665,300 640,305 625,300 620,285"), B("495,262 530,275 520,292 525,310"), B("462,308 490,315"), B("425,320 428,345 415,352"), B("560,278 580,270 630,272 600,290 560,290 525,290"), B("560,290 585,300 600,290 612,310 660,308"), B("615,206 660,208"), B("620,218 658,222 660,200"), B("600,315 625,325 650,318 655,330"), B("575,300 610,310 605,330"), B("620,285 600,290"), B("525,280 560,285 580,275 605,280"),
  [...B("800,300 790,280 795,265 830,255 888,255 885,240"), ...C("18,252 18,238 65,228 110,235 125,243 150,250 192,270 148,292 145,312 100,318 70,325 50,322 0,297")],
  C("192,270 235,268 265,265 270,252 350,268 395,268 412,250 425,240 452,243 465,260 490,275 512,280 500,308 485,315 440,333"), C("192,270 215,280 225,300 270,312 310,320 365,305 372,292 412,285 388,275 395,268"),
  C("145,312 135,325 90,330 105,350 140,362 145,398 200,412 230,415 262,408 268,425 300,452 325,447 345,460"), C("145,400 160,418 220,424 240,415"), C("120,365 100,378 100,400 78,415 75,440"), C("12,365 30,360 65,345 88,348 105,350 120,368"), C("12,365 18,402 60,402 85,385 85,348"), C("18,402 28,432"), C("202,430 205,455 230,450 222,430 202,422"), C("265,408 245,430 235,450"), C("268,425 262,455 285,482 268,500 270,530"), C("300,452 285,465 300,480 320,478 335,505"), C("302,512 305,505 330,508"), C("0,315 30,340 60,350"), C("60,330 95,325"), C("0,345 12,365"), C("455,347 475,345"),
  B("755,318 785,325 800,330"), B("770,325 778,350 790,385 800,402"), B("718,358 775,350"), B("712,375 735,372 760,360"), B("712,390 745,385 760,360"), B("708,405 745,385 790,402 800,405"), B("762,490 820,480 845,460 848,440"), B("820,480 832,490"), B("858,300 850,320 890,330 900,345"), B("832,345 860,340 885,365 890,430"), B("860,300 900,320"),
  E("142,10 228,68 295,40 268,22 268,-10 262,-45"), E("140,10 142,22 160,28"), E("165,-5 188,-15 190,-42"), E("228,68 228,92 165,110 160,92"), E("160,28 158,92 92,95"), E("92,92 120,98 122,118 95,122"), E("295,40 370,65 370,-15"), E("370,48 452,48"), E("370,65 362,65 355,95 368,130 435,130 445,110 452,85 462,80 450,48"), E("302,42 308,62 298,115 310,142 352,127"), E("228,92 222,108 285,110 298,115"), E("298,118 285,140 275,165"), E("222,108 222,165"), E("165,115 190,95 222,110"), E("185,160 182,125 205,122 208,158"), E("213,160 213,122"), E("150,165 148,130 120,118"), E("150,130 182,128"), E("112,145 120,130 130,148"), E("300,120 305,150 352,130 378,165 330,170 305,182 300,150"), E("368,130 380,150 408,172 432,168 438,130"), E("445,110 435,140 448,168 482,175 522,148 495,122 488,102 455,98"), E("548,118 497,125"), E("432,170 435,205 468,232"), E("482,175 480,215"), E("330,170 325,200 305,230 285,235 320,240 325,252 350,250 352,272 395,288 395,258 405,250 400,205 408,180 408,172"), E("262,187 300,185 298,215 280,228"), E("270,170 275,185 325,182"), E("282,317 350,320 375,320"), E("350,282 352,310 365,320"), E("340,320 340,355 335,392 305,388"), E("340,378 375,375 415,350 378,320 400,305 428,310 422,345 415,352 417,378"), E("395,258 435,265 432,292 400,305"), E("405,208 435,205 470,238"), E("435,275 478,272"), E("435,290 442,300 438,312 428,300"), E("400,225 410,212 400,212"), E("388,395 395,393 400,400 392,407 386,402 388,395"), E("412,378 418,376 418,384 412,382"),
  D("760,62 765,85 790,95 795,130 775,135 777,165"), D("795,130 815,130 825,112 842,110 838,85"), D("842,110 850,125 905,125 910,120"), D("865,98 858,115 868,125"), D("885,102 885,122"), D("712,135 735,140 740,150 715,172 702,165"), D("738,140 775,160 750,180 755,200 780,212 805,205"), D("780,212 778,260 790,292 830,288 832,275 855,268 855,250 840,235 805,205"), D("828,285 835,300 855,305 860,325 885,320 880,300 858,290 852,272"), D("885,320 860,345 858,375"), D("865,345 888,362"), D("790,292 785,330 770,380 765,430 758,480 770,500"),
  F("498,215 498,258"), F("290,190 318,188 325,170 342,172"),
];
const lines = [
  A("35,254 80,248 120,240 165,228 195,222 210,208"), A("320,202 345,212 360,230 380,250 415,275"), A("165,452 185,460 200,472"), A("760,528 800,525 835,530"), A("790,482 825,480 835,495 837,520"), A("685,455 705,450 740,465"), A("710,430 740,440 765,460"),
  B("770,520 840,518"), B("780,58 820,60 900,50"), B("20,60 90,47"), B("765,152 800,140 870,133"), B("530,330 532,340"), B("555,325 590,345"), B("385,415 410,410"),
  B("60,50 130,42 230,37 330,44"), B("88,98 108,118 122,150 130,175"), B("345,60 345,90 320,120"), B("505,190 525,180 560,150 600,132 680,128"),
  C("618,292 645,275 680,248"), C("588,465 590,490 583,515"), C("240,495 228,525 245,560"), C("98,530 98,598"), C("95,115 105,130 100,145 78,152"), C("105,120 140,118 165,125"), C("115,140 130,140"), C("428,455 430,475"), C("470,425 490,400"), C("548,370 552,395"), C("245,405 260,408 245,418 225,420"), C("210,52 270,58 330,75"), C("525,92 620,95"),
  D("1062,520 1070,530 1065,542"), D("742,430 740,470 750,495 775,512 800,515"), D("746,430 744,470 756,495 785,510"), D("760,430 765,450 755,480"),
  F("355,205 362,180 370,200 385,195 395,180"), F("358,230 378,238"), F("200,175 225,215"), F("250,245 330,255 400,258 435,245"), F("375,270 395,258"), F("540,240 560,230 580,225"), F("555,210 580,225 600,245 640,270"), F("675,290 685,310 692,335"), F("655,335 682,350"), F("715,180 740,215"), F("735,240 762,262"), F("712,433 728,448"), F("362,100 385,110 395,130 370,125 345,150"), F("205,95 210,130 230,155 245,190"),
];
/* clusters: tile, cx, cy, rx, ry, count */
const clusters = [
  [A, 480, 82, 60, 14, 40], [A, 560, 85, 55, 22, 44], [A, 650, 65, 55, 22, 170], [A, 720, 55, 90, 14, 90], [A, 500, 130, 60, 12, 36], [A, 580, 118, 40, 20, 44], [A, 680, 120, 55, 22, 50], [A, 790, 160, 35, 18, 35], [A, 338, 212, 20, 10, 60], [A, 360, 232, 18, 12, 70], [A, 392, 260, 24, 10, 50], [A, 660, 160, 50, 12, 20], [A, 540, 148, 60, 5, 30], [A, 810, 290, 35, 12, 28], [A, 720, 210, 12, 20, 20], [A, 735, 345, 8, 16, 28], [A, 225, 198, 30, 8, 30], [A, 350, 130, 50, 4, 20], [A, 490, 420, 15, 22, 16], [A, 870, 268, 25, 12, 20], [A, 735, 450, 40, 22, 24], [A, 690, 540, 28, 10, 20], [A, 800, 525, 40, 6, 16], [A, 185, 462, 16, 8, 10], [A, 35, 119, 10, 3, 8], [A, 740, 110, 60, 8, 30], [A, 800, 130, 30, 12, 20],
  [B, 30, 55, 40, 18, 46], [B, 105, 122, 12, 14, 60], [B, 120, 150, 9, 20, 70], [B, 335, 85, 16, 34, 120], [B, 300, 122, 26, 8, 40], [B, 230, 40, 110, 5, 60], [B, 600, 66, 50, 9, 46], [B, 840, 55, 60, 6, 46], [B, 515, 190, 14, 13, 70], [B, 580, 145, 35, 8, 40], [B, 640, 128, 40, 6, 36], [B, 540, 225, 14, 12, 36], [B, 442, 212, 12, 10, 20], [B, 642, 345, 16, 16, 60], [B, 590, 300, 30, 14, 26], [B, 530, 330, 5, 12, 12], [B, 580, 345, 20, 10, 10], [B, 490, 335, 12, 5, 8], [B, 370, 410, 22, 6, 12], [B, 308, 492, 10, 10, 8], [B, 367, 518, 10, 10, 50], [B, 285, 345, 16, 5, 6], [B, 424, 183, 6, 4, 8], [B, 725, 165, 20, 5, 14], [B, 600, 215, 20, 12, 12], [B, 690, 365, 18, 5, 8], [B, 830, 430, 20, 8, 16], [B, 420, 245, 14, 9, 10], [B, 640, 210, 25, 10, 12],
  [C, 150, 112, 45, 14, 36], [C, 240, 60, 32, 8, 22], [C, 300, 72, 32, 6, 22], [C, 10, 52, 30, 5, 22], [C, 360, 100, 20, 7, 18], [C, 565, 105, 25, 6, 18], [C, 570, 92, 50, 4, 18], [C, 75, 328, 25, 8, 36], [C, 95, 350, 20, 8, 14], [C, 495, 378, 25, 10, 40], [C, 465, 370, 12, 10, 16], [C, 700, 205, 14, 10, 16], [C, 735, 232, 10, 3, 5], [C, 790, 248, 30, 6, 9], [C, 215, 440, 16, 14, 22], [C, 98, 565, 4, 32, 30], [C, 535, 232, 14, 5, 16], [C, 475, 415, 12, 10, 8], [C, 415, 345, 12, 12, 12], [C, 570, 265, 8, 28, 14], [C, 545, 345, 14, 14, 12], [C, 740, 132, 70, 5, 14], [C, 562, 425, 4, 12, 5],
  [D, 748, 455, 11, 38, 130], [D, 752, 490, 14, 14, 60], [D, 775, 503, 24, 11, 90], [D, 845, 490, 14, 5, 18], [D, 635, 140, 10, 10, 12], [D, 1000, 507, 8, 3, 6], [D, 1087, 30, 10, 10, 8], [D, 265, 247, 25, 14, 26], [D, 305, 270, 22, 16, 16], [D, 225, 255, 18, 7, 10], [D, 80, 165, 16, 12, 6], [D, 90, 232, 20, 6, 8], [D, 35, 262, 10, 18, 13], [D, 62, 278, 8, 16, 8], [D, 172, 273, 12, 14, 8], [D, 300, 205, 10, 10, 7], [D, 910, 145, 12, 8, 18], [D, 170, 108, 20, 8, 3], [D, 85, 203, 10, 10, 4], [D, 900, 355, 14, 12, 12], [D, 780, 62, 50, 5, 16], [D, 720, 85, 12, 8, 14],
  [E, 97, 115, 10, 9, 45], [E, 697, 160, 4, 42, 36], [E, 688, 240, 7, 8, 6], [E, 575, 240, 12, 12, 7], [E, 672, 532, 7, 5, 12], [E, 502, 280, 8, 5, 7], [E, 518, 264, 5, 4, 3], [E, 577, 342, 3, 3, 5], [E, 592, 336, 3, 3, 4], [E, 403, 218, 5, 10, 14], [E, 490, 115, 8, 6, 12], [E, 250, 190, 10, 18, 4], [E, 560, 115, 14, 3, 5], [E, 472, 350, 5, 4, 2],
  [F, 378, 122, 18, 22, 95], [F, 355, 140, 16, 20, 20], [F, 412, 195, 9, 18, 24], [F, 265, 180, 16, 24, 14], [F, 315, 250, 60, 7, 40], [F, 395, 258, 35, 8, 30], [F, 370, 215, 18, 22, 34], [F, 420, 215, 25, 12, 26], [F, 445, 235, 14, 10, 14], [F, 565, 235, 26, 12, 26], [F, 615, 258, 28, 14, 36], [F, 680, 298, 12, 34, 24], [F, 668, 343, 16, 10, 20], [F, 753, 320, 12, 12, 30], [F, 690, 140, 20, 24, 12], [F, 725, 195, 16, 18, 10], [F, 748, 250, 14, 14, 6], [F, 560, 145, 10, 10, 5], [F, 475, 432, 9, 8, 20], [F, 445, 280, 30, 5, 24], [F, 310, 372, 5, 10, 14], [F, 215, 190, 16, 28, 18], [F, 175, 125, 6, 30, 9], [F, 720, 445, 10, 10, 8], [F, 12, 532, 7, 4, 12], [F, 450, 208, 25, 8, 20], [F, 575, 270, 12, 5, 8], [F, 395, 300, 22, 8, 12], [F, 235, 160, 12, 26, 14], [F, 255, 222, 10, 8, 9], [F, 527, 80, 4, 25, 9], [F, 210, 110, 5, 30, 20], [F, 555, 345, 20, 14, 10], [F, 530, 465, 14, 4, 10],
];
const speck = clusters.map(([t, cx, cy, rx, ry, n], i) => {
  const r = rand(7919 * (i + 3)), o = t("0,0")[0];
  let d = "";
  for (let k = 0; k < n; k++) {
    const a = r() * 6.283, m = Math.sqrt(r());
    const x = o[0] + (cx + Math.cos(a) * m * rx) / 3, y = o[1] + (cy + Math.sin(a) * m * ry) / 3;
    d += `M${x.toFixed(1)} ${y.toFixed(1)}l${((r() - 0.4) * 1.8).toFixed(1)} ${((r() - 0.5) * 1.2).toFixed(1)}`;
  }
  return d;
}).join("");
const dots = [
  ...A("60,119 95,175 80,193 98,217 42,411 71,427 86,430 110,434 133,443 152,447 101,490 150,560 165,575 184,591 448,407 466,434 473,479 498,475 509,534 659,566 697,577 811,384 845,305 530,457 700,472 727,480 698,515 706,512 848,515"),
  ...B("414,122 378,213 32,384 260,335 356,380 360,382 600,98 640,84 655,68 675,68 700,62 720,60 67,515 271,598"),
  ...C("125,63 141,55 637,87 663,80 818,120 645,438 732,472 748,505 491,428 555,400 443,437 437,436 495,555 512,550 540,540 555,538 616,545 630,552 655,575 707,568 672,565 775,585 740,545 520,560"),
  ...D("53,135 68,170 166,142 199,167 195,178 126,212 159,209 179,200 221,216 42,236 57,245 98,268 44,337 272,325 224,292 237,298 249,300 365,302 380,305 405,307 509,323 536,319 708,318 704,367 715,367 54,437 53,436 55,438 1051,133 1031,165 1053,278"),
  ...E("1,193 104,253 163,307 3,338 240,208 585,268 571,308 631,332 492,317 118,450 134,473 224,568 458,517 543,512 551,514 727,455 727,460 698,558 699,560"),
  ...F("30,235 199,281 258,270 68,456 68,461 671,68 688,100 586,34 502,15 505,28 453,148 478,134 493,133 592,172 590,195 613,160 647,163 620,412 681,396 704,350 726,347 590,341 670,270 738,215 668,543 688,555 754,535 619,568 38,558 667,120 695,110 710,180 760,262 432,190 440,175 580,155 618,152"),
];
const landD = land.map((p) => rough(p, true, 1.3)).join("");
const waterD = water.map((p) => rough(p, true, 0.6)).join("");
const borderD = borders.map((p) => rough(p, false, 0.7)).join("");
const lineD = lines.map((p) => rough(p, false, 1.2)).join("");
const dotD = dots.map((p) => `M${p[0].toFixed(1)} ${p[1].toFixed(1)}h.2`).join("");

const WorldMap = () => (
  <svg width="855" height="788" viewBox="594 194 855 788" fill="none" stroke="#232323" strokeWidth="1.6" strokeLinejoin="round" strokeLinecap="round">
    <path d={landD} fill="#d5e8b8" />
    <path d={waterD} fill="#fff" />
    <path d={borderD} strokeWidth="1.5" />
    <path d={lineD} strokeWidth="1.8" strokeDasharray="4 1.8 2 1.8" />
    <path d={speck} strokeWidth="1.6" />
    <path d={dotD} strokeWidth="1.6" />
  </svg>
);

const small = {
  brush: <g><path d="M1 7l4-2 6 5-4 6-5-3z" fill="#f0a040" /><path d="M1 8l4-2 2 3-4 2z" fill="#e45b4a" /><path d="M5 13l5-4 1 2-3 4z" fill="#6f9ad0" /><path d="M8 8l6-6 1 2-5 6z" fill="#c9862f" /></g>,
  group: <g fill="none" stroke="#777"><path d="M4.500 4v9h8V4zM2.500 6v9h8M6.500 2v9h8V4.500L12 2z" /><path d="M8.500 0v9" stroke="#6d98c8" strokeWidth="1.500" /><rect x="9.500" y="10.500" width="6" height="6" fill="#5aa261" stroke="none" /><path d="M12.500 11.500v4M10.500 13.500h4" stroke="#fff" /></g>,
  eye: <g><path d="M0 8q7-8 15 0-7 7-15 0z" fill="#ddd" stroke="#888" /><circle cx="7.500" cy="7.500" r="3.500" fill="#5b7896" /><circle cx="7.500" cy="7.500" r="1.500" fill="#111" /><path d="M9 10h8l-4 5z" fill="#444" /></g>,
  filter: <g><path d="M1.500 2h13l-5 6.500V15l-3-1.500v-5z" fill="#6c98ca" stroke="#4c6f98" /><path d="M1.500 1h13v2.500h-13z" fill="#f2dd50" stroke="#b7a32b" strokeWidth=".6" /></g>,
  epsilon: <g><text x="-.5" y="9.500" fontFamily="DejaVu Sans" fontSize="14" fill="#6a3a72" stroke="#6a3a72" strokeWidth=".3">ε</text><path d="M7.500 9h6.500v3l-1 3.500h-1.500V12h-1.500v3.500H8.500l-1-3.500z" fill="#ddd" stroke="#888" strokeWidth=".8" /></g>,
  expand: <g><path d="M.5 1.500h14M2.500 1.500v12M2.500 6.500h4M2.500 12.500h4" stroke="#888" /><rect x="4" y="5" width="3.500" height="3.500" fill="#f6c35c" stroke="#e8891c" /><rect x="4" y="11" width="3.500" height="3.500" fill="#f6c35c" stroke="#e8891c" /><path d="M9 2h3.500v7h2L10.700 14.500 7.500 9H9z" fill="#5e8ec2" stroke="#3a618d" /></g>,
  collapse: <g><path d="M.5 1.500h14M2.500 1.500v12M2.500 6.500h4M2.500 12.500h4" stroke="#888" /><rect x="4" y="5" width="3.500" height="3.500" fill="#f6c35c" stroke="#e8891c" /><rect x="4" y="11" width="3.500" height="3.500" fill="#f6c35c" stroke="#e8891c" /><path d="M9 14h3.500V7h2L10.700 1.500 7.500 7H9z" fill="#5e8ec2" stroke="#3a618d" /></g>,
  remove: <g><rect x="1.500" y="1.500" width="10" height="11" fill="#f7f7f7" stroke="#888" /><rect x="9" y="10" width="6" height="5" rx="1.500" fill="#e2474c" /><path d="M10 12.500h4" stroke="#fff" /></g>,
};
const dockTools = [["brush", 25], ["group", 26], ["eye", 24], ["filter", 25], ["epsilon", 18], ["caret", 25], ["expand", 25], ["collapse", 25], ["remove", 24]];

export default function App() {
  return (
    <Window>
      <Global />
      <TitleBar>
        <svg width="24" height="24" viewBox="0 0 24 24">
          <circle cx="11.500" cy="11.500" r="8.700" fill="none" stroke="#75a935" strokeWidth="5" />
          <path d="M4.500 16.500a8.700 8.700 0 0 0 7 3.700" fill="none" stroke="#4d8126" strokeWidth="5" />
          <path d="M12 12h4l7.500 7.500V23H20l-8-8z" fill="#8fc04a" stroke="#203f5a" strokeWidth=".6" />
          <path d="M9.500 9l5 .8 2.200 2.700-3.200 3.200-3-2.200z" fill="#f28d28" />
          <path d="M9.500 9l4 3-2.500 1.500z" fill="#f7d34c" />
        </svg>
        <span>*Untitled Project — QGIS</span>
      </TitleBar>
      <MenuBar>
        {menu.map(([a, u, b, w]) => <MenuItem key={a + u + b} $w={w}>{a}<u>{u}</u>{b}</MenuItem>)}
      </MenuBar>
      {rows.map((r, i) => <Toolbar key={i} $h={i === 2 ? 42 : 43}>{r.map(renderTool)}</Toolbar>)}
      <Main>
        <Dock>
          <DockTitle>
            <span>Layers</span>
            <svg width="14" height="14" viewBox="0 0 14 14" fill="none" stroke="#666"><rect x="1.500" y="2.500" width="10" height="10" rx="2" /><path d="M5.500 6.500V4.500h4v4h-2M3.500 6.500h4v4h-4z" /></svg>
            <svg width="14" height="14" viewBox="0 0 14 14" fill="none" stroke="#666"><rect x="1.500" y="2.500" width="10" height="10" rx="2" /><path d="M4 5l5 5M9 5l-5 5" stroke="#444" strokeWidth="2" /></svg>
          </DockTitle>
          <DockTools>
            {dockTools.map(([n, w]) => n === "caret" ? <Caret key={n} $w={w} /> : <ToolSlot key={n} $w={w}><svg width="16" height="16" viewBox="0 0 16 16" fill="none">{small[n]}</svg></ToolSlot>)}
          </DockTools>
          <Tree>
            <LayerRow>
              <Check><svg width="18" height="18" viewBox="0 0 18 18"><path d="M3 9l4 5.500L15 3" fill="none" stroke="#000" strokeWidth="2.400" /></svg></Check>
              <Swatch />
              <span>WHO_World_Country_Boundaries</span>
            </LayerRow>
          </Tree>
        </Dock>
        <Splitter />
        <MapFrame><WorldMap /></MapFrame>
      </Main>
      <Callout>Right Click</Callout>
      <ArrowLayer width="110" height="215" viewBox="310 270 110 215">
        <g transform="translate(3 3)" opacity=".35" fill="#444"><path d="M324.500 279l28 31.500-9 3.500 66 158-6 3-67-158.500-9 4.500z" style={{ filter: "blur(1.200px)" }} /></g>
        <path d="M324 278.500l29 32-9 4.200 66.200 155.300v2.500h-6.700L337 317.500l-9.500 4z" fill="#f00" />
      </ArrowLayer>
    </Window>
  );
}
